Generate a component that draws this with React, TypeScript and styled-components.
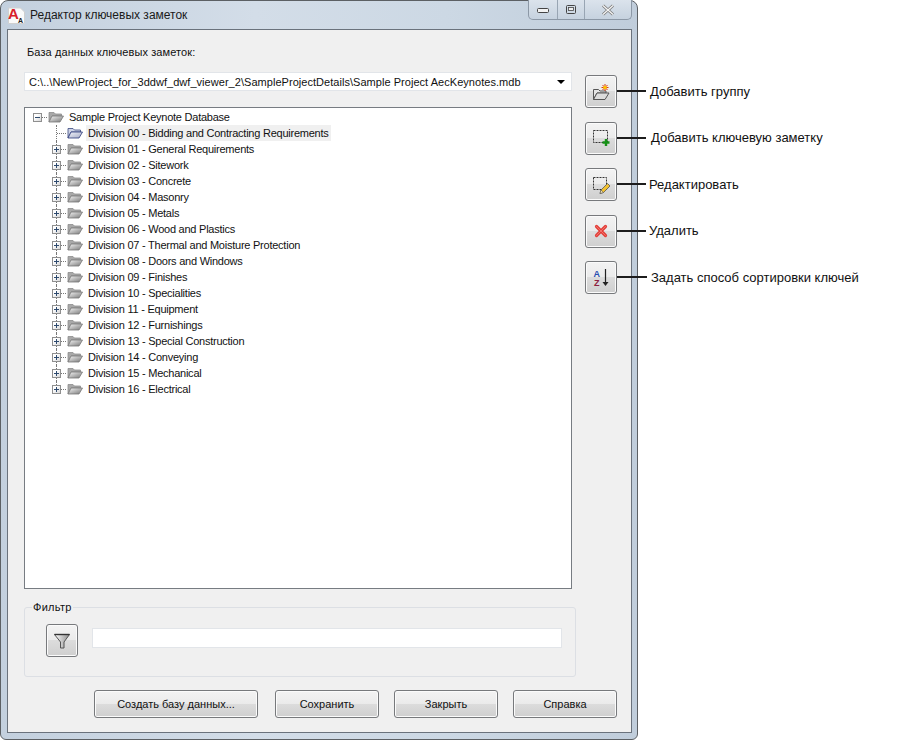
import React from 'react'
import styled, { createGlobalStyle } from 'styled-components'

const Global = createGlobalStyle`
  html, body { margin: 0; padding: 0; background: #fff; }
  body { font-family: "Liberation Sans", Arial, sans-serif; font-size: 11px; color: #111; }
`

const Win = styled.div`
  position: relative;
  box-sizing: border-box;
  width: 638px;
  height: 740px;
  display: flex;
  flex-direction: column;
  padding: 0 5px 6px 6px;
  border: 1px solid #5c6064;
  border-radius: 8px 8px 6px 6px;
  background: linear-gradient(90deg, #c3d0de 0%, #d3dde8 40%, #ccd8e4 70%, #c0cddb 100%);
`
const TitleBar = styled.div`
  height: 28px;
  flex: none;
  display: flex;
  align-items: flex-start;
  justify-content: space-between;
`
const TitleLeft = styled.div`
  display: flex;
  align-items: center;
  gap: 5px;
  padding: 5px 0 0 1px;
`
const TitleText = styled.span`
  font-size: 12px;
  line-height: 18px;
  color: #1a1a1a;
`
const Controls = styled.div`
  display: flex;
  height: 20px;
  margin-top: -1px;
  box-sizing: border-box;
  border: 1px solid #8c98a6;
  border-top: none;
  border-radius: 0 0 5px 5px;
  background: linear-gradient(180deg, #dbe3ec 0%, #c6d2df 100%);
`
const Control = styled.div<{ $w: number; $last?: boolean }>`
  width: ${p => p.$w}px;
  display: flex;
  align-items: center;
  justify-content: center;
  border-right: ${p => (p.$last ? 'none' : '1px solid #98a5b3')};
`
const Client = styled.div`
  flex: 1;
  box-sizing: border-box;
  border: 1px solid #6a727c;
  background: #f0f0f0;
  padding: 15px 0 0 16px;
`
const Main = styled.div`
  display: flex;
  gap: 13px;
`
const LeftCol = styled.div`
  width: 548px;
  flex: none;
`
const FieldLabel = styled.div`
  line-height: 15px;
  margin: 0 0 12px 3px;
  letter-spacing: 0.1px;
`
const Combo = styled.div`
  box-sizing: border-box;
  height: 19px;
  display: flex;
  align-items: center;
  justify-content: space-between;
  padding: 0 6px 0 4px;
  background: #fff;
  border: 1px solid #e2e5e9;
  white-space: nowrap;
  letter-spacing: 0.04px;
`
const Caret = styled.span`
  width: 0;
  height: 0;
  border-left: 4px solid transparent;
  border-right: 4px solid transparent;
  border-top: 4px solid #000;
`
const Tree = styled.div`
  box-sizing: border-box;
  height: 482px;
  margin-top: 16px;
  padding: 1px 0 0 3px;
  background: #fff;
  border: 1px solid #777c82;
`
const Row = styled.div<{ $child?: boolean }>`
  display: flex;
  align-items: center;
  height: 16px;
  padding-left: ${p => (p.$child ? 19 : 0)}px;
`
const Guide = styled.span<{ $vertical?: boolean; $last?: boolean }>`
  position: relative;
  flex: none;
  width: 19px;
  height: 16px;
  margin-right: 1px;
  display: flex;
  align-items: center;
  justify-content: center;
  &::before {
    content: '';
    display: ${p => (p.$vertical ? 'block' : 'none')};
    position: absolute;
    left: 9px;
    top: 0;
    height: ${p => (p.$last ? 8 : 16)}px;
    border-left: 1px dotted #777;
  }
  &::after {
    content: '';
    position: absolute;
    left: 10px;
    right: 0;
    top: 8px;
    border-top: 1px dotted #777;
  }
`
const Expander = styled.span<{ $open?: boolean }>`
  position: relative;
  z-index: 1;
  box-sizing: border-box;
  width: 9px;
  height: 9px;
  margin: 1px 0 0 0;
  border: 1px solid #8f8f8f;
  background: linear-gradient(135deg, #fff 30%, #d8d8d8 100%);
  &::before {
    content: '';
    position: absolute;
    left: 1px;
    top: 3px;
    width: 5px;
    height: 1px;
    background: #2e4a6e;
  }
  &::after {
    content: '';
    display: ${p => (p.$open ? 'none' : 'block')};
    position: absolute;
    left: 3px;
    top: 1px;
    width: 1px;
    height: 5px;
    background: #2e4a6e;
  }
`
const RowLabel = styled.span<{ $selected?: boolean }>`
  margin-left: 3px;
  padding: 0 2px;
  line-height: 16px;
  white-space: nowrap;
  letter-spacing: -0.24px;
  background: ${p => (p.$selected ? '#f0f0f0' : 'transparent')};
`
const ToolCol = styled.div`
  display: flex;
  flex-direction: column;
  gap: 13.5px;
  padding-top: 30.25px;
`
const ToolSlot = styled.div`
  position: relative;
  width: 32px;
  height: 33px;
`
const Raised = styled.button`
  box-sizing: border-box;
  display: flex;
  align-items: center;
  justify-content: center;
  padding: 0;
  font: inherit;
  color: #111;
  border: 1px solid #77797c;
  border-radius: 3px;
  box-shadow: inset 0 0 0 1px #fbfbfb;
  background: linear-gradient(180deg, #f3f3f3 0%, #ebebeb 48%, #dcdcdc 50%, #cfcfcf 100%);
`
const IconButton = styled(Raised)`
  width: 32px;
  height: 33px;
`
const Callout = styled.div<{ $line: number; $gap: number }>`
  position: absolute;
  left: 32px;
  top: 16px;
  display: flex;
  align-items: center;
  height: 0;
  white-space: nowrap;
  &::before {
    content: '';
    width: ${p => p.$line}px;
    height: 2px;
    background: #1d1d1d;
    margin-right: ${p => p.$gap}px;
  }
`
const CalloutText = styled.span`
  font-size: 13px;
  color: #111;
`
const GroupBox = styled.fieldset`
  box-sizing: border-box;
  width: 552px;
  height: 77px;
  margin: 11px 0 0 0;
  padding: 10px 0 0 21px;
  border: 1px solid #dcdfe4;
  border-radius: 3px;
  display: flex;
  align-items: flex-start;
  gap: 14px;
`
const Legend = styled.legend`
  margin-left: -14px;
  padding: 0 1px;
  line-height: 14px;
  letter-spacing: 0.3px;
`
const FilterInput = styled.input`
  box-sizing: border-box;
  width: 470px;
  height: 20px;
  margin-top: 4px;
  background: #fff;
  border: 1px solid #e2e5e9;
  outline: none;
`
const Footer = styled.div`
  display: flex;
  justify-content: flex-end;
  gap: 15px;
  width: 593px;
  margin-top: 13px;
`
const FooterButton = styled(Raised)<{ $wide?: boolean }>`
  width: ${p => (p.$wide ? 164 : 104)}px;
  height: 28px;
  margin-right: ${p => (p.$wide ? 2 : 0)}px;
`

const FolderIcon = ({ selected }: { selected?: boolean }) => {
  const id = selected ? 'folderSel' : 'folderFace'
  return (
    <svg width="16" height="12" viewBox="0 0 16 12" style={{ flex: 'none' }}>
      <defs>
        <linearGradient id={id} x1="0" y1="0" x2="1" y2="1">
          <stop offset="0" stopColor={selected ? '#f2f4fb' : '#f6f6f6'} />
          <stop offset="1" stopColor={selected ? '#a4aac4' : '#777'} />
        </linearGradient>
      </defs>
      <path d="M1 1.500h5l1.500 1.500h6V5H4L1 11z" fill={selected ? '#cfd4e6' : '#a8a8a8'} stroke={selected ? '#39477f' : '#8e8e8e'} strokeWidth="0.8" />
      <path d="M4 5H15.500L12 11H1z" fill={`url(#${id})`} stroke={selected ? '#2c3a7c' : '#777'} strokeWidth="0.8" />
    </svg>
  )
}

const NewFolderIcon = () => (
  <svg width="22" height="22" viewBox="0 0 22 22">
    <path d="M3.500 8.500h5l1.500 1.500h6v2H7L3.500 18.500z" fill="#e4e4e4" stroke="#555" />
    <path d="M7 12h12l-4 6.500H3.500z" fill="#dcdcdc" stroke="#555" />
    <path d="M15 3v7M11.500 6.500h7M12.500 4l5 5M17.500 4l-5 5" stroke="#d83a10" strokeWidth="1" />
    <circle cx="15" cy="6.500" r="1.800" fill="#ffc400" />
  </svg>
)

const NewNoteIcon = () => (
  <svg width="22" height="22" viewBox="0 0 22 22">
    <rect x="3.500" y="3.500" width="14" height="12" fill="none" stroke="#333" strokeDasharray="2 1" />
    <path d="M16 12v7M12.500 15.500h7" stroke="#169016" strokeWidth="2.400" />
  </svg>
)

const EditNoteIcon = () => (
  <svg width="22" height="22" viewBox="0 0 22 22">
    <rect x="3.500" y="3.500" width="13" height="12" fill="none" stroke="#333" strokeDasharray="2 1" />
    <path d="M10 19.500l1-3.500 6.500-6.500 2.500 2.500-6.500 6.500z" fill="#f2c230" stroke="#555" strokeWidth="0.8" />
    <path d="M10 19.500l1-3.500 2.500 2.500z" fill="#f7e7b8" stroke="#555" strokeWidth="0.6" />
  </svg>
)

const DeleteIcon = () => (
  <svg width="14" height="14" viewBox="0 0 14 14">
    <path d="M2.500 2.500l9 9M11.500 2.500l-9 9" stroke="#e2403a" strokeWidth="3.200" strokeLinecap="round" />
    <path d="M2.500 2.500l9 9M11.500 2.500l-9 9" stroke="#f4716a" strokeWidth="1" strokeLinecap="round" />
  </svg>
)

const SortIcon = () => (
  <svg width="22" height="22" viewBox="0 0 22 22">
    <text x="3.500" y="9.500" fontFamily="Liberation Sans" fontWeight="700" fontSize="9" fill="#2a4fb0">A</text>
    <text x="4" y="18.500" fontFamily="Liberation Sans" fontWeight="700" fontSize="9" fill="#8c2040">Z</text>
    <path d="M15.500 2v15" stroke="#222" strokeWidth="1.200" />
    <path d="M12.500 15h6l-3 4z" fill="#222" />
  </svg>
)

const FilterIcon = () => (
  <svg width="18" height="18" viewBox="0 0 18 18">
    <defs>
      <linearGradient id="funnel" x1="0" y1="0" x2="1" y2="0">
        <stop offset="0" stopColor="#fff" />
        <stop offset="1" stopColor="#8e8e8e" />
      </linearGradient>
    </defs>
    <path d="M1.500 2.500h15L11 10V16H7.500V10z" fill="url(#funnel)" stroke="#555" />
    <path d="M1.500 2.500h15" stroke="#333" strokeWidth="1.400" />
  </svg>
)

const AppIcon = () => (
  <svg width="17" height="18" viewBox="0 0 17 18">
    <path d="M0.500 2h12l4 4v11.500H0.500z" fill="#fafafa" stroke="#d0d0d0" />
    <text x="0" y="13" fontFamily="Liberation Sans" fontWeight="700" fontSize="15" fill="#d8202a">A</text>
    <text x="10" y="17" fontFamily="Liberation Sans" fontWeight="700" fontSize="7" fill="#222">A</text>
  </svg>
)

const divisions = [
  'Division 00 - Bidding and Contracting Requirements',
  'Division 01 - General Requirements',
  'Division 02 - Sitework',
  'Division 03 - Concrete',
  'Division 04 - Masonry',
  'Division 05 - Metals',
  'Division 06 - Wood and Plastics',
  'Division 07 - Thermal and Moisture Protection',
  'Division 08 - Doors and Windows',
  'Division 09 - Finishes',
  'Division 10 - Specialities',
  'Division 11 - Equipment',
  'Division 12 - Furnishings',
  'Division 13 - Special Construction',
  'Division 14 - Conveying',
  'Division 15 - Mechanical',
  'Division 16 - Electrical',
]

const tools = [
  { icon: <NewFolderIcon />, label: 'Добавить группу', line: 29, gap: 4 },
  { icon: <NewNoteIcon />, label: 'Добавить ключевую заметку', line: 29, gap: 5 },
  { icon: <EditNoteIcon />, label: 'Редактировать', line: 29, gap: 3 },
  { icon: <DeleteIcon />, label: 'Удалить', line: 29, gap: 3 },
  { icon: <SortIcon />, label: 'Задать способ сортировки ключей', line: 30, gap: 4 },
]

const App = () => {
  return (
    <>
      <Global />
      <Win>
        <TitleBar>
          <TitleLeft>
            <AppIcon />
            <TitleText>Редактор ключевых заметок</TitleText>
          </TitleLeft>
          <Controls>
            <Control $w={28}>
              <svg width="14" height="8" viewBox="0 0 14 8"><rect x="1.500" y="2.500" width="11" height="4" rx="1" fill="#f2f2f2" stroke="#444" /></svg>
            </Control>
            <Control $w={26}>
              <svg width="12" height="11" viewBox="0 0 12 11"><rect x="1.500" y="1.500" width="9" height="8" rx="1" fill="none" stroke="#444" /><rect x="3.500" y="3.500" width="5" height="3" fill="#eee" stroke="#444" strokeWidth="0.8" /></svg>
            </Control>
            <Control $w={46} $last>
              <svg width="14" height="12" viewBox="0 0 14 12"><path d="M2 1.500l10 9M12 1.500l-10 9" stroke="#777" strokeWidth="3" /><path d="M2 1.500l10 9M12 1.500l-10 9" stroke="#f4f4f4" strokeWidth="1.400" /></svg>
            </Control>
          </Controls>
        </TitleBar>
        <Client>
          <Main>
            <LeftCol>
              <FieldLabel>База данных ключевых заметок:</FieldLabel>
              <Combo>
                C:\..\New\Project_for_3ddwf_dwf_viewer_2\SampleProjectDetails\Sample Project AecKeynotes.mdb
                <Caret />
              </Combo>
              <Tree>
                <Row>
                  <Guide>
                    <Expander $open />
                  </Guide>
                  <FolderIcon />
                  <RowLabel>Sample Project Keynote Database</RowLabel>
                </Row>
                {divisions.map((d, i) => (
                  <Row $child key={d}>
                    <Guide $vertical $last={i === divisions.length - 1}>
                      {i > 0 && <Expander />}
                    </Guide>
                    <FolderIcon selected={i === 0} />
                    <RowLabel $selected={i === 0}>{d}</RowLabel>
                  </Row>
                ))}
              </Tree>
            </LeftCol>
            <ToolCol>
              {tools.map(t => (
                <ToolSlot key={t.label}>
                  <IconButton>{t.icon}</IconButton>
                  <Callout $line={t.line} $gap={t.gap}>
                    <CalloutText>{t.label}</CalloutText>
                  </Callout>
                </ToolSlot>
              ))}
            </ToolCol>
          </Main>
          <GroupBox>
            <Legend>Фильтр</Legend>
            <IconButton><FilterIcon /></IconButton>
            <FilterInput readOnly />
          </GroupBox>
          <Footer>
            <FooterButton $wide>Создать базу данных...</FooterButton>
            <FooterButton>Сохранить</FooterButton>
            <FooterButton>Закрыть</FooterButton>
            <FooterButton>Справка</FooterButton>
          </Footer>
        </Client>
      </Win>
    </>
  )
}

export default App
